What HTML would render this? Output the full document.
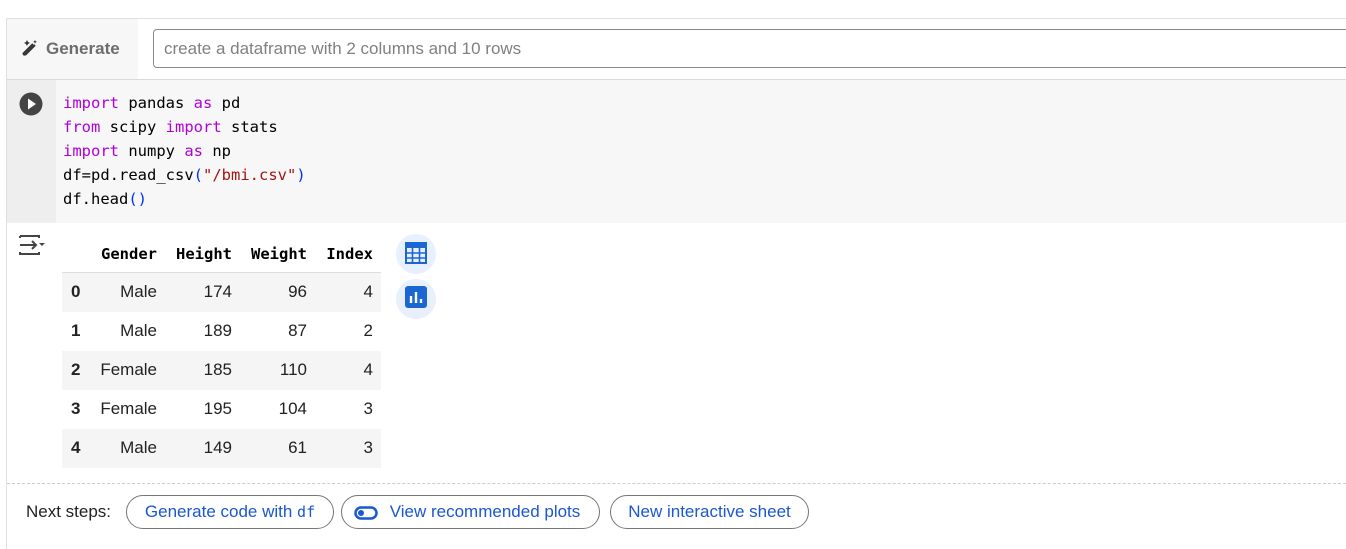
<!DOCTYPE html>
<html><head><style>
body{margin:0;width:1346px;height:537px;background:#fff;font-family:"Liberation Sans",Arial,sans-serif;overflow:hidden;position:relative}
.card{position:absolute;left:6px;top:18px;width:1345px;height:530px;border-left:1px solid #e0e0e0;border-top:1px solid #e0e0e0}
.gen{position:absolute;left:7px;top:19px;width:131px;height:60px;background:#f7f7f7}
.genbar{position:absolute;left:7px;top:19px;width:1339px;height:60px;background:#fff;border-bottom:1px solid #dadada}
.gent{position:absolute;left:46px;top:39px;font-size:17px;color:#555;font-weight:bold;opacity:.85}
.inp{position:absolute;left:153px;top:29px;width:1200px;height:39px;border:1px solid #8a8a8a;border-radius:4px;box-sizing:border-box}
.inp span{position:absolute;left:10px;top:9px;font-size:17px;color:#808080}
.gut{position:absolute;left:7px;top:80px;width:49px;height:143px;background:#eeeeee}
.code{position:absolute;left:56px;top:80px;width:1290px;height:143px;background:#f7f7f7}
pre{position:absolute;left:63px;top:91px;margin:0;font-family:"DejaVu Sans Mono","Liberation Mono",monospace;font-size:15.5px;line-height:24px;color:#000}
.k{color:#af00db}.s{color:#a31515}.p{color:#0431fa}
table{position:absolute;left:62px;top:236px;border-collapse:collapse;font-size:17px;table-layout:fixed;width:319px}
th{font-family:"DejaVu Sans Mono",monospace;font-weight:bold;font-size:15.5px;height:36px;text-align:right;padding:0 8px;border-bottom:1px solid #ddd;box-sizing:border-box}
td{height:39px;text-align:right;padding:0 8px;color:#222}
td:first-child{font-weight:bold;text-align:left;padding-left:9px}
tr.g td{background:#f5f5f5}
.cb{position:absolute;left:396px;width:40px;height:40px;border-radius:50%;background:#e8f0fe}
.dash{position:absolute;left:7px;top:483px;width:1339px;border-top:1px dashed #ccc}
.ns{position:absolute;left:26px;top:502px;font-size:17px;color:#222}
.btn{position:absolute;top:495px;height:34px;border:1px solid #777;border-radius:18px;box-sizing:border-box;color:#1a57d2;font-size:17px;padding:0 15px;white-space:nowrap;display:flex;align-items:center;justify-content:center}
</style></head><body>
<div class="genbar"></div>
<div class="gen"></div>
<div class="card"></div>
<svg style="position:absolute;left:20px;top:39px" width="20" height="18" viewBox="0 0 20 18"><path d="M3 15 L13 5 M5 16 L15 6 M3 15 L5 16" stroke="#333" stroke-width="2" fill="none"/><path d="M7 1 l1 2 2 1 -2 1 -1 2 -1 -2 -2 -1 2 -1z M15 1 l.6 1.2 1.2.6 -1.2.6 -.6 1.2 -.6-1.2 -1.2-.6 1.2-.6z" fill="#333"/></svg>
<div class="gent">Generate</div>
<div class="inp"><span>create a dataframe with 2 columns and 10 rows</span></div>
<div class="gut"></div><div class="code"></div>
<svg style="position:absolute;left:19px;top:92px" width="24" height="24"><circle cx="12" cy="12" r="11.5" fill="#444"/><path d="M9 6.5 L17 12 L9 17.5Z" fill="#fff"/></svg>
<pre><span class="k">import</span> pandas <span class="k">as</span> pd
<span class="k">from</span> scipy <span class="k">import</span> stats
<span class="k">import</span> numpy <span class="k">as</span> np
df=pd.read_csv<span class="p">(</span><span class="s">"/bmi.csv"</span><span class="p">)</span>
df.head<span class="p">()</span></pre>
<svg style="position:absolute;left:18px;top:234px" width="28" height="22" viewBox="0 0 28 22"><path d="M2 2 V4 M2 2 H21 V4 M2 18 V20 H21 V18 M2 11 H18 M14 7 L18 11 L14 15" stroke="#444" stroke-width="2" fill="none"/><path d="M21 9 L27 9 L24 12Z" fill="#444"/></svg>
<table>
<colgroup><col style="width:28px"><col style="width:75px"><col style="width:75px"><col style="width:75px"><col style="width:66px"></colgroup>
<tr><th></th><th>Gender</th><th>Height</th><th>Weight</th><th>Index</th></tr>
<tr class="g"><td>0</td><td>Male</td><td>174</td><td>96</td><td>4</td></tr>
<tr><td>1</td><td>Male</td><td>189</td><td>87</td><td>2</td></tr>
<tr class="g"><td>2</td><td>Female</td><td>185</td><td>110</td><td>4</td></tr>
<tr><td>3</td><td>Female</td><td>195</td><td>104</td><td>3</td></tr>
<tr class="g"><td>4</td><td>Male</td><td>149</td><td>61</td><td>3</td></tr>
</table>
<div class="cb" style="top:234px"></div>
<svg style="position:absolute;left:405px;top:242px" width="22" height="22" viewBox="0 0 22 22"><rect x="1" y="1" width="20" height="20" fill="none" stroke="#1a67d2" stroke-width="2"/><rect x="1" y="1" width="20" height="5" fill="#1a67d2"/><path d="M1 11H21M1 16H21M7.5 6V21M14.5 6V21" stroke="#1a67d2" stroke-width="1.6"/></svg>
<div class="cb" style="top:279px"></div>
<svg style="position:absolute;left:405px;top:286px" width="22" height="22"><rect x="0" y="0" width="22" height="22" rx="3" fill="#1a67d2"/><path d="M6 10V17M11 6V17M16 13V17" stroke="#fff" stroke-width="2.4"/></svg>
<div class="dash"></div>
<div class="ns">Next steps:</div>
<div class="btn" style="left:126px;width:208px">Generate code with&nbsp;<span style="font-family:'DejaVu Sans Mono',monospace;font-size:15px">df</span></div>
<div class="btn" style="left:341px;width:259px;padding-left:44px"><svg style="position:absolute;left:12px;top:10px" width="24" height="14"><rect x="1.5" y="1.5" width="21" height="11" rx="5.5" fill="none" stroke="#1a57d2" stroke-width="2.5"/><circle cx="7" cy="7" r="3" fill="#1a57d2"/></svg>View recommended plots</div>
<div class="btn" style="left:610px;width:199px">New interactive sheet</div>
</body></html>
